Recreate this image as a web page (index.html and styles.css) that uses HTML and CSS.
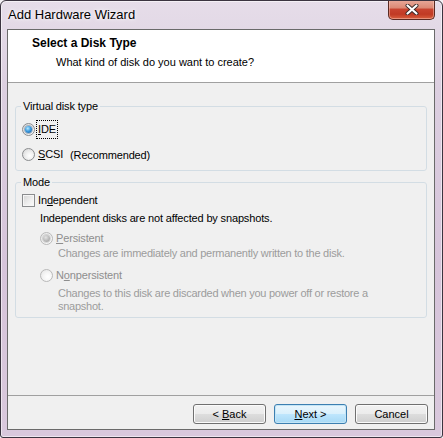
FILE: index.html
```html
<!DOCTYPE html>
<html lang="en">
<head>
<meta charset="utf-8">
<title>Add Hardware Wizard</title>
<link rel="stylesheet" href="styles.css">
</head>
<body>
<div class="window">
  <div class="titlebar">
    <span class="title">Add Hardware Wizard</span>
    <div class="close">
      <svg width="14" height="11" viewBox="0 0 14 11">
        <path d="M2.5 1.5 L11.5 9.5 M11.5 1.5 L2.5 9.5" stroke="#3a2a28" stroke-width="4" stroke-linecap="round"/>
        <path d="M2.5 1.5 L11.5 9.5 M11.5 1.5 L2.5 9.5" stroke="#ffffff" stroke-width="2.2" stroke-linecap="round"/>
      </svg>
    </div>
  </div>
  <div class="client">
    <div class="header">
      <div class="h-title">Select a Disk Type</div>
      <div class="h-sub">What kind of disk do you want to create?</div>
    </div>
    <div class="content">
      <fieldset class="group g1">
        <legend>Virtual disk type</legend>
        <div class="opt"><span class="radio checked"><span class="dot"></span></span><span class="label focus"><u>I</u>DE</span></div>
        <div class="opt row2"><span class="radio"></span><span class="label"><u>S</u>CSI</span><span class="note">(Recommended)</span></div>
      </fieldset>
      <fieldset class="group g2">
        <legend>Mode</legend>
        <div class="opt"><span class="check"></span><span class="label">In<u>d</u>ependent</span></div>
        <p class="info">Independent disks are not affected by snapshots.</p>
        <div class="opt sub disabled first"><span class="radio checked"><span class="dot"></span></span><span class="label"><u>P</u>ersistent</span></div>
        <p class="desc">Changes are immediately and permanently written to the disk.</p>
        <div class="opt sub disabled second"><span class="radio"></span><span class="label">N<u>o</u>npersistent</span></div>
        <p class="desc wrap">Changes to this disk are discarded when you power off or restore a snapshot.</p>
      </fieldset>
    </div>
    <div class="footer">
      <button class="btn" type="button">&lt; <u>B</u>ack</button>
      <button class="btn default" type="button"><u>N</u>ext &gt;</button>
      <button class="btn" type="button">Cancel</button>
    </div>
  </div>
</div>
</body>
</html>
```
FILE: styles.css
```css
* { box-sizing: border-box; }

html, body {
  margin: 0;
  padding: 0;
  background: #f4f1f5;
}

body {
  font-family: "Liberation Sans", Arial, sans-serif;
  font-size: 11px;
  color: #000;
}

.window {
  width: 443px;
  height: 438px;
  display: flex;
  flex-direction: column;
  border: 1px solid #3b3440;
  border-radius: 6px 6px 3px 3px;
  background: linear-gradient(180deg, #e6dde9 0%, #dccfe0 20%, #d6c4da 60%, #d9c8dc 100%);
  box-shadow: inset 0 0 0 1px rgba(255,255,255,0.55);
  overflow: hidden;
}

.titlebar {
  height: 28px;
  display: flex;
  align-items: flex-start;
  flex: none;
}

.title {
  flex: 1;
  padding: 6px 0 0 7px;
  font-size: 13px;
  line-height: 16px;
  color: #000;
  text-shadow: 0 0 6px rgba(255,255,255,0.9), 0 0 3px rgba(255,255,255,0.9);
}

.close {
  width: 47px;
  height: 20px;
  margin: -1px 7px 0 0;
  border: 1px solid #5a2a22;
  border-top: none;
  border-radius: 0 0 5px 5px;
  background: linear-gradient(180deg, #e9aa9b 0%, #dc8a76 40%, #c8432f 50%, #c13a24 75%, #d9603f 100%);
  box-shadow: inset 0 0 0 1px rgba(255,210,200,0.45);
  display: flex;
  align-items: center;
  justify-content: center;
}

.close svg { display: block; margin-top: -1px; }

.client {
  flex: 1;
  margin: 0 7px 7px 6px;
  border: 1px solid #6a6a6a;
  background: #f0f0f0;
  display: flex;
  flex-direction: column;
}

.header {
  height: 53px;
  flex: none;
  background: #fff;
  border-bottom: 1px solid #a0a0a0;
  padding: 6px 0 0 24px;
}

.h-title {
  font-size: 12px;
  line-height: 15px;
  font-weight: bold;
}

.h-sub {
  margin: 4px 0 0 24px;
  font-size: 11px;
  line-height: 14px;
}

.content {
  flex: 1;
  padding: 0 7px;
}

.group {
  margin: 0;
  padding: 0 6px;
  min-width: 0;
  border: 1px solid #d3dde4;
  border-radius: 3px;
  letter-spacing: -0.15px;
}

.group legend {
  margin-left: -1px;
  padding: 0 2px;
  line-height: 13px;
  font-size: 11px;
}

.g1 {
  margin-top: 17px;
  padding-top: 8px;
  padding-bottom: 7px;
}

.g2 {
  margin-top: 5px;
  padding-top: 3px;
  padding-bottom: 4px;
}

.opt {
  height: 17px;
  display: flex;
  align-items: center;
}

.row2 { margin-top: 8px; }

.label {
  margin-left: 3px;
  line-height: 13px;
}

.focus {
  outline: 1px dotted #000;
  outline-offset: 0;
  padding: 2px 1px;
  margin-left: 2px;
}

.note { margin-left: 7px; }

.radio {
  width: 13px;
  height: 13px;
  flex: none;
  border-radius: 50%;
  border: 1px solid #8a8c8e;
  background: radial-gradient(circle at 62% 62%, #ffffff 0%, #f2f2f2 35%, #d2d2d2 100%);
  display: flex;
  align-items: center;
  justify-content: center;
}

.radio .dot {
  width: 7px;
  height: 7px;
  border-radius: 50%;
  background: radial-gradient(circle at 40% 35%, #b8ecff 0%, #3c9be0 45%, #17548f 100%);
  box-shadow: 0 0 0 1px rgba(30,70,110,0.35);
}

.check {
  width: 13px;
  height: 13px;
  flex: none;
  border: 1px solid #8a8c8e;
  background: linear-gradient(135deg, #d4d4d4 0%, #f0f0f0 60%, #fbfbfb 100%);
  box-shadow: inset 0 0 0 1px #f6f6f6;
}

.info {
  margin: 3px 0 0 18px;
  line-height: 13px;
}

.sub { margin-left: 18px; }
.first { margin-top: 5px; }
.second { margin-top: 7px; }

.disabled { color: #8e8e8e; }

.disabled .radio {
  border-color: #b9b9b9;
  background: radial-gradient(circle at 62% 62%, #ffffff 0%, #f6f6f6 40%, #e2e2e2 100%);
}

.disabled .radio .dot {
  background: radial-gradient(circle at 40% 35%, #e4e4e4 0%, #b4b4b4 60%, #9d9d9d 100%);
  box-shadow: 0 0 0 1px rgba(120,120,120,0.25);
}

.desc {
  margin: 0 0 0 36px;
  line-height: 13px;
  color: #9c9c9c;
  letter-spacing: -0.25px;
}

.desc.wrap {
  margin-top: 3px;
  width: 334px;
}

.footer {
  height: 34px;
  flex: none;
  border-top: 1px solid #a0a0a0;
  padding: 8px 6px 0 0;
  display: flex;
  justify-content: flex-end;
  align-items: flex-start;
  gap: 8px;
}

.btn {
  width: 73px;
  height: 20px;
  margin: 0;
  padding: 0;
  font-family: "Liberation Sans", Arial, sans-serif;
  font-size: 11px;
  color: #000;
  border: 1px solid #707070;
  border-radius: 3px;
  background: linear-gradient(180deg, #f2f2f2 0%, #ebebeb 50%, #dddddd 51%, #cfcfcf 100%);
  box-shadow: inset 0 0 0 1px #fbfbfb;
}

.btn.default {
  border-color: #3c7fb1;
  background: linear-gradient(180deg, #eaf6fd 0%, #d9f0fc 50%, #bee6fd 51%, #a7d9f5 100%);
  box-shadow: inset 0 0 0 1px #c4e5f6;
}
```
